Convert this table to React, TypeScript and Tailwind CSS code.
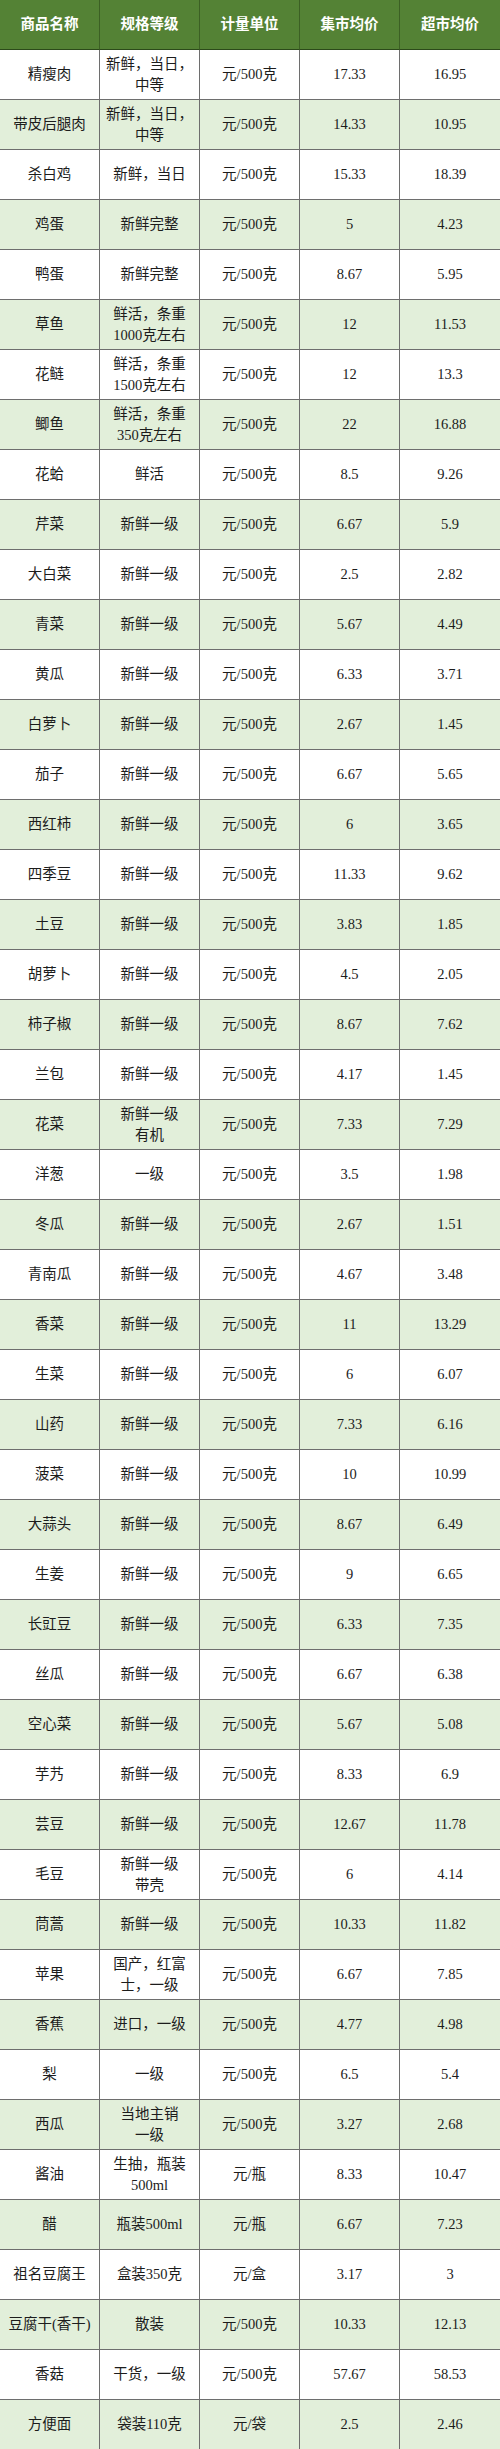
import React from 'react';

type Row = {
  name: string;
  spec: string[];
  unit: string;
  market: string;
  super: string;
};

const U = '元/500克';

const rows: Row[] = [
  { name: '精瘦肉', spec: ['新鲜，当日，', '中等'], unit: U, market: '17.33', super: '16.95' },
  { name: '带皮后腿肉', spec: ['新鲜，当日，', '中等'], unit: U, market: '14.33', super: '10.95' },
  { name: '杀白鸡', spec: ['新鲜，当日'], unit: U, market: '15.33', super: '18.39' },
  { name: '鸡蛋', spec: ['新鲜完整'], unit: U, market: '5', super: '4.23' },
  { name: '鸭蛋', spec: ['新鲜完整'], unit: U, market: '8.67', super: '5.95' },
  { name: '草鱼', spec: ['鲜活，条重', '1000克左右'], unit: U, market: '12', super: '11.53' },
  { name: '花鲢', spec: ['鲜活，条重', '1500克左右'], unit: U, market: '12', super: '13.3' },
  { name: '鲫鱼', spec: ['鲜活，条重', '350克左右'], unit: U, market: '22', super: '16.88' },
  { name: '花蛤', spec: ['鲜活'], unit: U, market: '8.5', super: '9.26' },
  { name: '芹菜', spec: ['新鲜一级'], unit: U, market: '6.67', super: '5.9' },
  { name: '大白菜', spec: ['新鲜一级'], unit: U, market: '2.5', super: '2.82' },
  { name: '青菜', spec: ['新鲜一级'], unit: U, market: '5.67', super: '4.49' },
  { name: '黄瓜', spec: ['新鲜一级'], unit: U, market: '6.33', super: '3.71' },
  { name: '白萝卜', spec: ['新鲜一级'], unit: U, market: '2.67', super: '1.45' },
  { name: '茄子', spec: ['新鲜一级'], unit: U, market: '6.67', super: '5.65' },
  { name: '西红柿', spec: ['新鲜一级'], unit: U, market: '6', super: '3.65' },
  { name: '四季豆', spec: ['新鲜一级'], unit: U, market: '11.33', super: '9.62' },
  { name: '土豆', spec: ['新鲜一级'], unit: U, market: '3.83', super: '1.85' },
  { name: '胡萝卜', spec: ['新鲜一级'], unit: U, market: '4.5', super: '2.05' },
  { name: '柿子椒', spec: ['新鲜一级'], unit: U, market: '8.67', super: '7.62' },
  { name: '兰包', spec: ['新鲜一级'], unit: U, market: '4.17', super: '1.45' },
  { name: '花菜', spec: ['新鲜一级', '有机'], unit: U, market: '7.33', super: '7.29' },
  { name: '洋葱', spec: ['一级'], unit: U, market: '3.5', super: '1.98' },
  { name: '冬瓜', spec: ['新鲜一级'], unit: U, market: '2.67', super: '1.51' },
  { name: '青南瓜', spec: ['新鲜一级'], unit: U, market: '4.67', super: '3.48' },
  { name: '香菜', spec: ['新鲜一级'], unit: U, market: '11', super: '13.29' },
  { name: '生菜', spec: ['新鲜一级'], unit: U, market: '6', super: '6.07' },
  { name: '山药', spec: ['新鲜一级'], unit: U, market: '7.33', super: '6.16' },
  { name: '菠菜', spec: ['新鲜一级'], unit: U, market: '10', super: '10.99' },
  { name: '大蒜头', spec: ['新鲜一级'], unit: U, market: '8.67', super: '6.49' },
  { name: '生姜', spec: ['新鲜一级'], unit: U, market: '9', super: '6.65' },
  { name: '长豇豆', spec: ['新鲜一级'], unit: U, market: '6.33', super: '7.35' },
  { name: '丝瓜', spec: ['新鲜一级'], unit: U, market: '6.67', super: '6.38' },
  { name: '空心菜', spec: ['新鲜一级'], unit: U, market: '5.67', super: '5.08' },
  { name: '芋艿', spec: ['新鲜一级'], unit: U, market: '8.33', super: '6.9' },
  { name: '芸豆', spec: ['新鲜一级'], unit: U, market: '12.67', super: '11.78' },
  { name: '毛豆', spec: ['新鲜一级', '带壳'], unit: U, market: '6', super: '4.14' },
  { name: '茼蒿', spec: ['新鲜一级'], unit: U, market: '10.33', super: '11.82' },
  { name: '苹果', spec: ['国产，红富', '士，一级'], unit: U, market: '6.67', super: '7.85' },
  { name: '香蕉', spec: ['进口，一级'], unit: U, market: '4.77', super: '4.98' },
  { name: '梨', spec: ['一级'], unit: U, market: '6.5', super: '5.4' },
  { name: '西瓜', spec: ['当地主销', '一级'], unit: U, market: '3.27', super: '2.68' },
  { name: '酱油', spec: ['生抽，瓶装', '500ml'], unit: '元/瓶', market: '8.33', super: '10.47' },
  { name: '醋', spec: ['瓶装500ml'], unit: '元/瓶', market: '6.67', super: '7.23' },
  { name: '祖名豆腐王', spec: ['盒装350克'], unit: '元/盒', market: '3.17', super: '3' },
  { name: '豆腐干(香干)', spec: ['散装'], unit: U, market: '10.33', super: '12.13' },
  { name: '香菇', spec: ['干货，一级'], unit: U, market: '57.67', super: '58.53' },
  { name: '方便面', spec: ['袋装110克'], unit: '元/袋', market: '2.5', super: '2.46' },
];

const headers = ['商品名称', '规格等级', '计量单位', '集市均价', '超市均价'];

const Cell: React.FC<{ lines: string[]; last?: boolean; green: boolean }> = ({ lines, last, green }) => (
  <div
    className={`h-[50px] flex flex-col items-center justify-center text-center leading-[21px] border-b border-[#6e6e6e] ${
      last ? '' : 'border-r'
    } ${green ? 'bg-[#e2efda]' : 'bg-white'}`}
  >
    {lines.map((l, i) => (
      <span key={i} className="whitespace-nowrap">{l}</span>
    ))}
  </div>
);

export default function App() {
  return (
    <div
      className="w-[500px] bg-white text-[#1c1c1c] text-[14.5px]"
      style={{ fontFamily: "'Liberation Serif', 'Noto Sans CJK SC', serif" }}
    >
      {/* Header */}
      <div className="grid grid-cols-5 bg-[#548235]">
        {headers.map((h, i) => (
          <div
            key={h}
            className={`h-[50px] flex items-center justify-center text-white font-bold border-b border-[#2c4a1a] ${
              i < 4 ? 'border-r border-r-[#3c6024]' : ''
            }`}
          >
            {h}
          </div>
        ))}
      </div>

      {/* Body */}
      {rows.map((r, idx) => {
        const green = idx % 2 === 1;
        return (
          <div key={r.name} className="grid grid-cols-5">
            <Cell lines={[r.name]} green={green} />
            <Cell lines={r.spec} green={green} />
            <Cell lines={[r.unit]} green={green} />
            <Cell lines={[r.market]} green={green} />
            <Cell lines={[r.super]} green={green} last />
          </div>
        );
      })}
    </div>
  );
}
